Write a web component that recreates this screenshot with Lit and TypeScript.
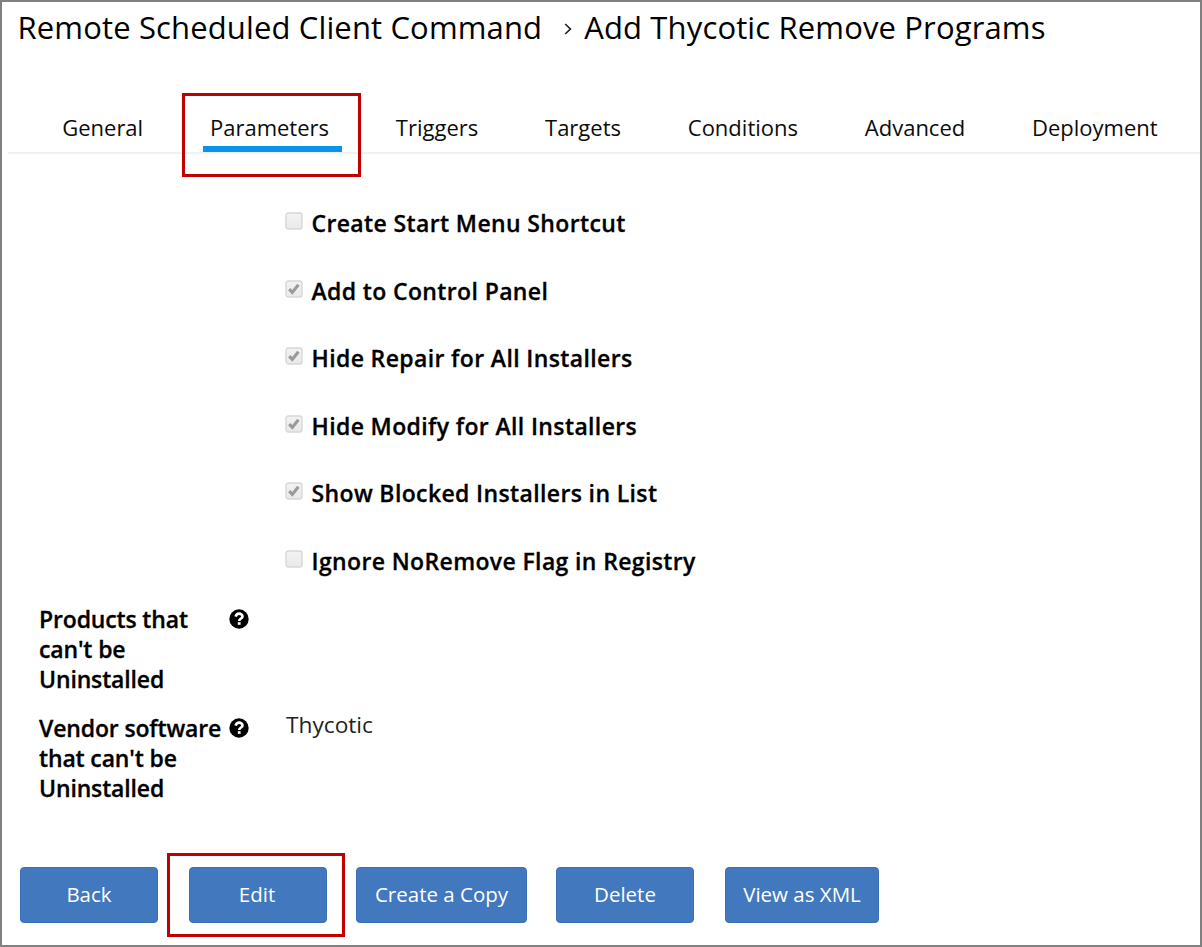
import { LitElement, html, css, svg } from "lit";
import { customElement, property } from "lit/decorators.js";
import { classMap } from "lit/directives/class-map.js";

@customElement("check-option")
class CheckOption extends LitElement {
  @property({ type: Boolean }) checked = false;
  @property() label = "";

  static styles = css`
    :host { display: flex; align-items: flex-start; height: 67.5px; }
    .box { display: block; width: 18px; height: 18px; margin-right: 8.5px; flex: none; }
    .label { font-weight: 600; font-size: 23px; line-height: 30px; letter-spacing: 0.37px; -webkit-text-stroke: 0.3px #000; color: #000; white-space: nowrap; margin-top: -3.6px; }
  `;

  render() {
    return html`
      <svg class="box" viewBox="0 0 18 18">
        <defs>
          <linearGradient id="g" x1="0" y1="0" x2="0" y2="1">
            <stop offset="0" stop-color="#f3f3f3" /><stop offset="1" stop-color="#e9e9e9" />
          </linearGradient>
        </defs>
        <rect x="1" y="1" width="16" height="16" rx="2.2" fill="url(#g)" stroke="#d8d8d8" stroke-width="1.4" />
        ${this.checked
          ? svg`<path d="M4.2 9.2 L7.3 12.4 L13.4 4.8" fill="none" stroke="#9a9a9a" stroke-width="3.1" />`
          : null}
      </svg>
      <span class="label">${this.label}</span>
    `;
  }
}

@customElement("help-icon")
class HelpIcon extends LitElement {
  static styles = css`
    :host { display: block; width: 20px; height: 20px; }
    .icon { display: block; width: 20px; height: 20px; }
  `;

  render() {
    return html`
      <svg class="icon" viewBox="0 0 20 20">
        <circle cx="10" cy="10" r="9.7" fill="#000" />
        <path d="M6.6 7.7 C7.2 5.5 8.5 4.6 10.1 4.6 C12.1 4.6 13.5 5.8 13.5 7.4 C13.5 9.5 10.2 9.6 10.2 12" fill="none" stroke="#fff" stroke-width="2.6" />
        <rect x="8.8" y="13.2" width="2.8" height="2.6" fill="#fff" />
      </svg>
    `;
  }
}

@customElement("app-root")
class AppRoot extends LitElement {
  tabs = ["General", "Parameters", "Triggers", "Targets", "Conditions", "Advanced", "Deployment"];
  options = [
    { label: "Create Start Menu Shortcut", checked: false },
    { label: "Add to Control Panel", checked: true },
    { label: "Hide Repair for All Installers", checked: true },
    { label: "Hide Modify for All Installers", checked: true },
    { label: "Show Blocked Installers in List", checked: true },
    { label: "Ignore NoRemove Flag in Registry", checked: false },
  ];

  static styles = css`
    :host { display: block; font-family: "Open Sans", sans-serif; color: #0c0c0c; }
    .page { box-sizing: border-box; width: 1202px; height: 947px; border: 2px solid #808080; background: #fff; overflow: hidden; display: flex; flex-direction: column; }
    .crumbs { display: flex; align-items: center; height: 50px; padding-left: 15.5px; font-size: 31px; letter-spacing: 0.14px; white-space: nowrap; color: #000; }
    .chevron { width: 8px; height: 12px; margin: 4px 12px 0 22px; flex: none; }
    .tabs { display: flex; gap: 66.8px; box-sizing: border-box; height: 62px; margin: 40px 0 0 6px; padding-left: 54.2px; border-bottom: 2px solid #eef2f7; font-size: 22px; white-space: nowrap; }
    .tab { position: relative; line-height: 30px; padding-top: 20px; }
    .active::before { content: ""; position: absolute; left: -7px; right: -12.5px; top: 54px; height: 6px; background: #0a93ea; }
    .active::after { content: ""; position: absolute; left: -28px; right: -32px; top: 1px; height: 78px; border: 3px solid #c00000; }
    .options { padding: 58px 0 0 283px; height: 391px; }
    .field { display: grid; grid-template-columns: 190.4px 56.6px 1fr; padding-left: 37px; height: 109px; }
    .name { font-size: 23px; font-weight: 600; line-height: 30px; letter-spacing: -0.15px; -webkit-text-stroke: 0.3px #000; color: #000; white-space: nowrap; padding-top: 1px; }
    .help { margin-top: 6px; }
    .value { font-size: 22.7px; line-height: 30px; color: #222; margin-top: -2px; }
    .actions { display: flex; padding-left: 18px; margin-top: 46px; }
    .btn { position: relative; font: inherit; box-sizing: border-box; height: 56px; width: 138px; border: 1px solid #3b70b8; border-radius: 4px; background: #4278be; color: #fff; font-size: 20.5px; padding: 0 0 3px; white-space: nowrap; margin-right: 31px; }
    .edit { margin-right: 29px; padding-right: 2px; }
    .copy { width: 171px; margin-right: 29px; }
    .xml { width: 154px; }
    .edit::after { content: ""; position: absolute; left: -23px; right: -19px; top: -15px; bottom: -15px; border: 3px solid #c00000; }
  `;

  render() {
    return html`
      <div class="page">
        <header class="crumbs">
          <span class="parent">Remote Scheduled Client Command</span>
          <svg class="chevron" viewBox="0 0 8 12"><path d="M1.2 1 L6.4 6 L1.2 11" fill="none" stroke="#222" stroke-width="1.7" /></svg>
          <span class="current">Add Thycotic Remove Programs</span>
        </header>
        <nav class="tabs">
          ${this.tabs.map((t, i) => html`<div class=${classMap({ tab: true, active: i === 1 })}>${t}</div>`)}
        </nav>
        <section class="options">
          ${this.options.map((o) => html`<check-option .label=${o.label} .checked=${o.checked}></check-option>`)}
        </section>
        <div class="field">
          <div class="name">Products that<br />can't be<br />Uninstalled</div>
          <help-icon class="help"></help-icon>
          <div class="value"></div>
        </div>
        <div class="field">
          <div class="name">Vendor software<br />that can't be<br />Uninstalled</div>
          <help-icon class="help"></help-icon>
          <div class="value">Thycotic</div>
        </div>
        <footer class="actions">
          <button class="btn">Back</button>
          <button class="btn edit">Edit</button>
          <button class="btn copy">Create a Copy</button>
          <button class="btn">Delete</button>
          <button class="btn xml">View as XML</button>
        </footer>
      </div>
    `;
  }
}
